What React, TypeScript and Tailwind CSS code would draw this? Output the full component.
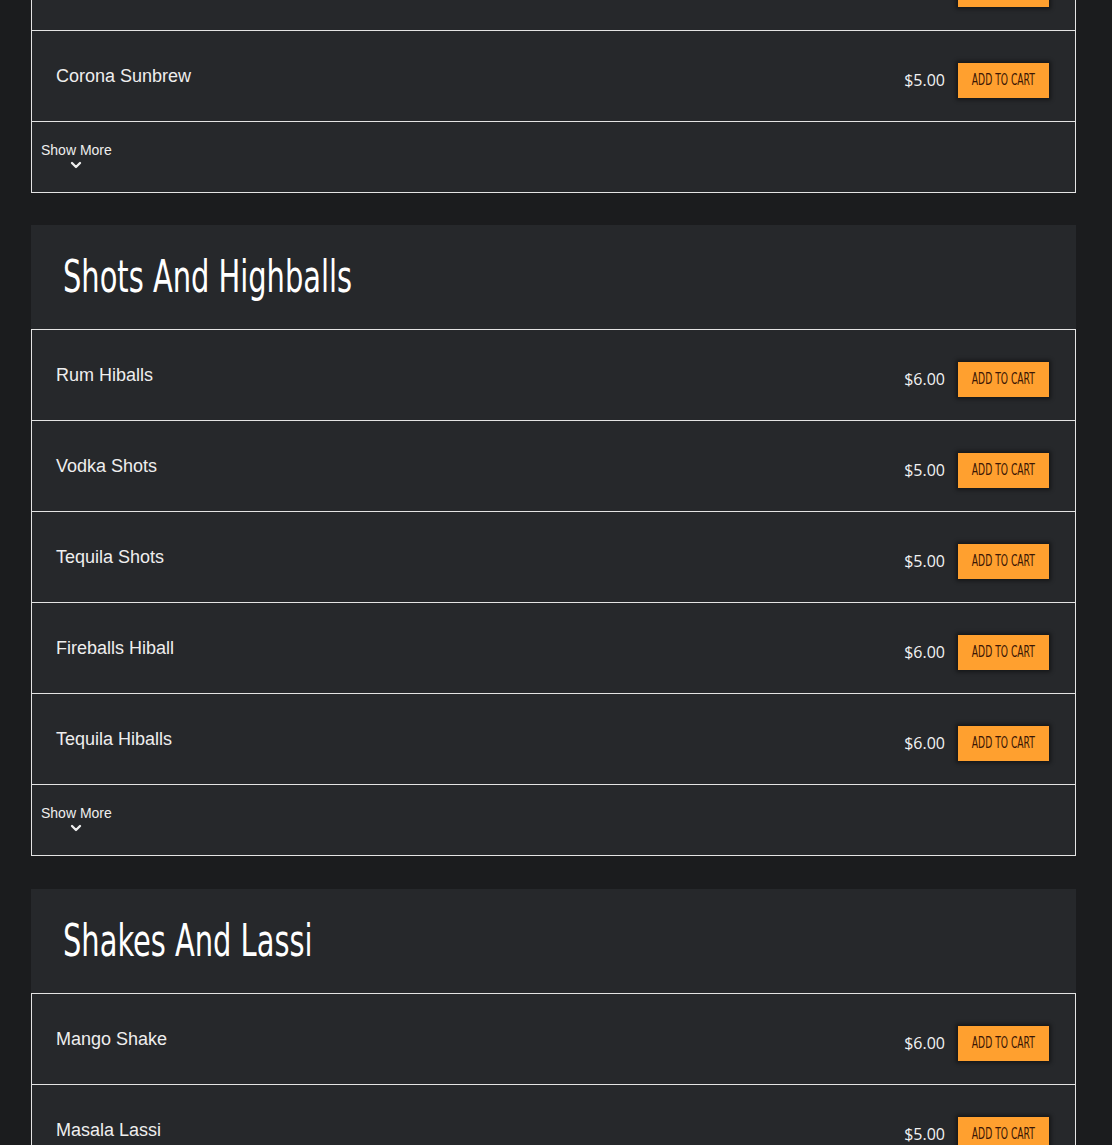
import React from 'react';
import { ChevronDown } from 'lucide-react';

type Item = { name: string; price: string };

const sections: { title?: string; items: Item[] }[] = [
  {
    items: [{ name: 'Kingfisher Premium', price: '$5.00' }, { name: 'Corona Sunbrew', price: '$5.00' }],
  },
  {
    title: 'Shots And Highballs',
    items: [
      { name: 'Rum Hiballs', price: '$6.00' },
      { name: 'Vodka Shots', price: '$5.00' },
      { name: 'Tequila Shots', price: '$5.00' },
      { name: 'Fireballs Hiball', price: '$6.00' },
      { name: 'Tequila Hiballs', price: '$6.00' },
    ],
  },
  {
    title: 'Shakes And Lassi',
    items: [
      { name: 'Mango Shake', price: '$6.00' },
      { name: 'Masala Lassi', price: '$5.00' },
    ],
  },
];

const MenuRow = ({ item }: { item: Item }) => (
  <div className="flex h-[91px] items-center justify-between border-t border-[#e4e4e4] pl-6 pr-[26px]">
    <div className="text-[18px] text-[#eeeeee] [font-family:'Liberation_Sans',Arial,sans-serif]">{item.name}</div>
    <div className="mt-2 flex items-center gap-[13px]">
      <span className="text-[16px] text-[#f2f2f2] [font-family:'Open_Sans',sans-serif]">{item.price}</span>
      <button className="flex h-[35px] w-[91px] items-center justify-center bg-[#ffa02f] shadow-[0_0_4px_2px_rgba(0,0,0,0.45)]">
        <span className="inline-block scale-x-[0.68] whitespace-nowrap text-[15px] uppercase text-[#3a1605] [font-family:'DejaVu_Sans_Condensed',sans-serif]">
          Add to Cart
        </span>
      </button>
    </div>
  </div>
);

export default function App() {
  return (
    <div className="h-[1145px] overflow-hidden bg-[#1b1c1e] pl-[31px] pr-9">
      <div className="-mt-[61px] flex flex-col gap-8">
        {sections.map((s, i) => (
          <section key={i} className={i === 2 ? 'mt-px bg-[#26282b]' : 'bg-[#26282b]'}>
            {s.title && (
              <div className="flex h-[104px] items-center pl-8">
                <h2 className="origin-left scale-x-[0.73] whitespace-nowrap text-[44px] leading-none text-white [font-family:'DejaVu_Sans_Condensed',sans-serif]">
                  {s.title}
                </h2>
              </div>
            )}
            <div className="border-x border-b border-[#e4e4e4]">
              {s.items.map((it) => (
                <MenuRow key={it.name} item={it} />
              ))}
              <div className="h-[71px] border-t border-[#e4e4e4] pl-[9px] pt-[15px]">
                <button className="inline-flex flex-col items-center text-[14px] leading-none text-[#eeeeee] [font-family:'Liberation_Sans',Arial,sans-serif]">
                  Show More
                  <ChevronDown className="h-4 w-4" strokeWidth={3.5} />
                </button>
              </div>
            </div>
          </section>
        ))}
      </div>
    </div>
  );
}
